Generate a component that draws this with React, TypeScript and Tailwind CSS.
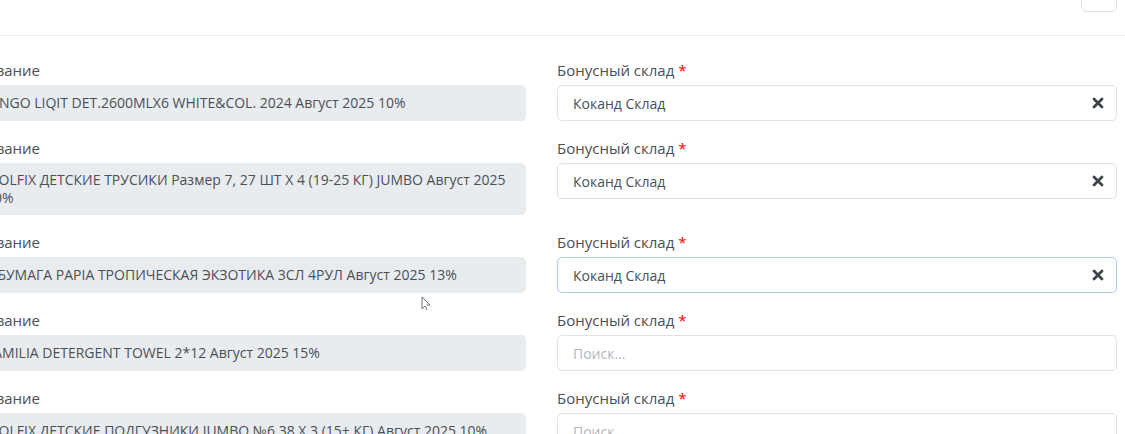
import React from "react";

type Row = {
  name: string;
  value?: string;
  focused?: boolean;
};

const rows: Row[] = [
  { name: "BINGO LIQIT DET.2600MLX6 WHITE&COL. 2024 Август 2025 10%", value: "Коканд Склад" },
  { name: "MOLFIX ДЕТСКИЕ ТРУСИКИ Размер 7, 27 ШТ X 4 (19-25 КГ) JUMBO Август 2025 10%", value: "Коканд Склад" },
  { name: "Т.БУМАГА PAPIA ТРОПИЧЕСКАЯ ЭКЗОТИКА 3СЛ 4РУЛ Август 2025 13%", value: "Коканд Склад", focused: true },
  { name: "FAMILIA DETERGENT TOWEL 2*12 Август 2025 15%" },
  { name: "MOLFIX ДЕТСКИЕ ПОДГУЗНИКИ JUMBO №6 38 X 3 (15+ КГ) Август 2025 10%" },
];

function ClearIcon() {
  return (
    <svg width="12" height="12" viewBox="0 0 12 12" aria-hidden="true">
      <path d="M2 2 L10 10 M10 2 L2 10" stroke="#3d434b" strokeWidth="2.8" strokeLinecap="round" />
    </svg>
  );
}

export default function App() {
  return (
    <div
      className="relative w-[1125px] h-[434px] overflow-hidden bg-white text-[14px] text-[#495057]"
      style={{ fontFamily: '"Open Sans", "Noto Sans", sans-serif' }}
    >
      <div className="h-[36px] border-b border-[#f1f3f5] flex justify-end pr-[8px]">
        <div className="-mt-[24px] w-[36px] h-[36px] rounded-md border border-[#dee2e6] bg-white" />
      </div>
      <div className="pt-[24px] -ml-[31px] grid grid-cols-[557px_560px] gap-x-[31px] gap-y-[17px] items-start">
        {rows.map((r, i) => (
          <React.Fragment key={i}>
            <div className="flex flex-col">
              <label className="text-[15px] leading-5 mb-[5px] whitespace-nowrap">Название</label>
              <div className="min-h-[36px] flex items-center rounded-[5px] bg-[#e9ecef] border border-[#e9ecef] pl-4 pr-4 py-[7px] leading-[18px]">
                <span>{r.name}</span>
              </div>
            </div>
            <div className="flex flex-col">
              <label className="text-[15px] leading-5 mb-[5px] whitespace-nowrap">
                Бонусный склад <span className="text-[#ff0000]">*</span>
              </label>
              <div
                className={
                  "h-[36px] rounded-[5px] border bg-white pl-[15px] pr-[12px] flex items-center justify-between " +
                  (r.focused ? "border-[#b4c8f4]" : "border-[#dee2e6]")
                }
              >
                {r.value ? (
                  <>
                    <span>{r.value}</span>
                    <ClearIcon />
                  </>
                ) : (
                  <span className="text-[#b1b7bf]">Поиск...</span>
                )}
              </div>
            </div>
          </React.Fragment>
        ))}
      </div>
      <svg className="absolute left-[421px] top-[296px]" width="10" height="16" viewBox="0 0 10 16" aria-hidden="true">
        <path d="M1 1 L1 13 L4 10 L6 14 M1 1 L9 9 L5.5 9" fill="none" stroke="#6b7078" strokeWidth="1" />
      </svg>
    </div>
  );
}
